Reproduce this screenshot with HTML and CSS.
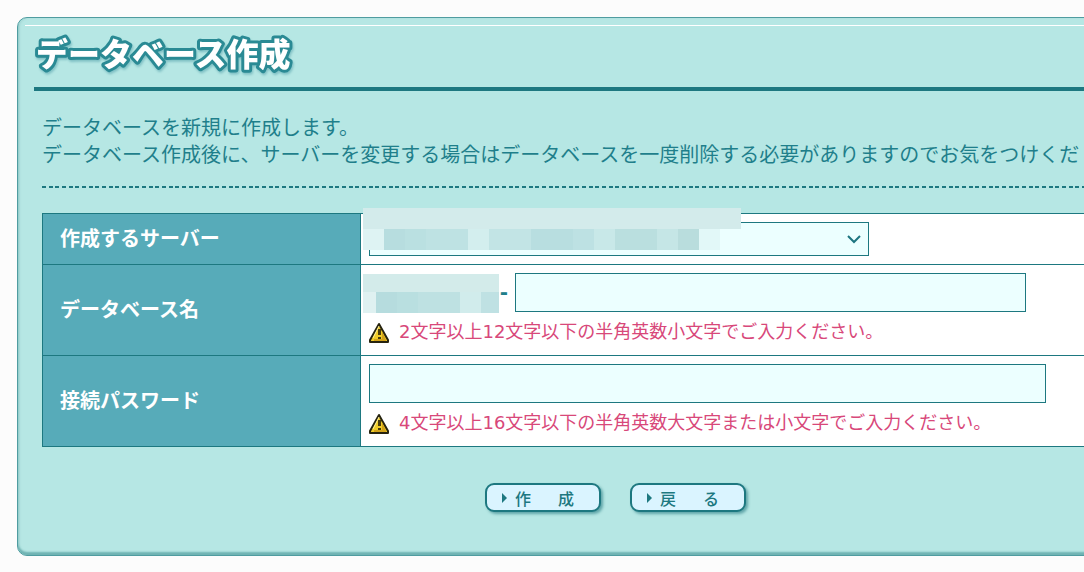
FILE: index.html
```html
<!DOCTYPE html>
<html lang="ja">
<head>
  <meta charset="UTF-8">
  <meta name="viewport" content="width=device-width, initial-scale=1.0">
  <title>データベース作成</title>
  <link rel="stylesheet" href="styles.css">
</head>
<body>
  <main class="panel">
    <h1 class="title">
      <svg width="264" height="48">
        <text x="2" y="37">データベース作成</text>
      </svg>
    </h1>

    <div class="content">
      <p class="lead">
        データベースを新規に作成します。<br>
        データベース作成後に、サーバーを変更する場合はデータベースを一度削除する必要がありますのでお気をつけくだ
      </p>

      <form action="#" method="post">
        <table class="form-table">
          <tr>
            <th scope="row"><label for="server">作成するサーバー</label></th>
            <td>
              <div class="field">
                <select id="server" name="server">
                  <option value=""></option>
                </select>
                <svg class="arrow" width="16" height="10" viewBox="0 0 16 10" aria-hidden="true">
                  <path d="M2 2l6 6 6-6" fill="none" stroke="#1d7580" stroke-width="2"/>
                </svg>
                <svg class="mask mask-server" width="378" height="42" viewBox="0 0 378 42" aria-hidden="true">
                  <path fill="#d3ebeb" d="M0 0h378v21H0z"/>
                  <path fill="#def3f3" d="M0 21h21v21H0z"/>
                  <path fill="#b7dddf" d="M21 21h21v21H21z"/>
                  <path fill="#bae0e1" d="M42 21h21v21H42z"/>
                  <path fill="#bee2e3" d="M63 21h42v21H63z"/>
                  <path fill="#d3eeee" d="M105 21h21v21h-21z"/>
                  <path fill="#c2e4e5" d="M126 21h42v21h-42z"/>
                  <path fill="#b8dee0" d="M168 21h42v21h-42z"/>
                  <path fill="#bde1e3" d="M210 21h21v21h-21z"/>
                  <path fill="#c8e8e8" d="M231 21h21v21h-21z"/>
                  <path fill="#badfdf" d="M252 21h42v21h-42z"/>
                  <path fill="#c5e6e6" d="M294 21h21v21h-21z"/>
                  <path fill="#b9dddd" d="M315 21h21v21h-21z"/>
                  <path fill="#e2f8f8" d="M336 21h21v21h-21z"/>
                </svg>
              </div>
            </td>
          </tr>
          <tr>
            <th scope="row"><label for="dbname">データベース名</label></th>
            <td>
              <div class="field">
                <span class="prefix">-</span>
                <input class="name-input" type="text" id="dbname" name="dbname">
                <svg class="mask mask-prefix" width="136" height="39" viewBox="0 0 136 39" aria-hidden="true">
                  <path fill="#d3ebea" d="M0 0h136v18H0z"/>
                  <path fill="#dff1f1" d="M0 18h13v21H0z"/>
                  <path fill="#b6dcde" d="M13 18h21v21H13z"/>
                  <path fill="#b9dfe0" d="M34 18h21v21H34z"/>
                  <path fill="#bee1e2" d="M55 18h42v21H55z"/>
                  <path fill="#d1ecec" d="M97 18h21v21H97z"/>
                  <path fill="#bfe1e3" d="M118 18h18v21h-18z"/>
                </svg>
              </div>
              <p class="hint">
                <svg width="20" height="20" viewBox="0 0 20 20" aria-hidden="true">
                  <path d="M10 1L1 17v2h18v-2z" fill="#f0cc28" stroke="#26230f" stroke-width="2" stroke-linejoin="round"/>
                  <path d="M13 8l4 9v1H5v-2h8z" fill="#d3a31a"/>
                  <path d="M10 3L4 15" stroke="#fff3a0" fill="none"/>
                  <path d="M9 6h3v6H9zM9 14h3v2H9z" fill="#4a3d0c"/>
                </svg>
                <span>2文字以上12文字以下の半角英数小文字でご入力ください。</span>
              </p>
            </td>
          </tr>
          <tr>
            <th scope="row"><label for="password">接続パスワード</label></th>
            <td>
              <div class="field">
                <input class="password-input" type="password" id="password" name="password">
              </div>
              <p class="hint">
                <svg width="20" height="20" viewBox="0 0 20 20" aria-hidden="true">
                  <path d="M10 1L1 17v2h18v-2z" fill="#f0cc28" stroke="#26230f" stroke-width="2" stroke-linejoin="round"/>
                  <path d="M13 8l4 9v1H5v-2h8z" fill="#d3a31a"/>
                  <path d="M10 3L4 15" stroke="#fff3a0" fill="none"/>
                  <path d="M9 6h3v6H9zM9 14h3v2H9z" fill="#4a3d0c"/>
                </svg>
                <span>4文字以上16文字以下の半角英数大文字または小文字でご入力ください。</span>
              </p>
            </td>
          </tr>
        </table>

        <div class="buttons">
          <button type="submit"><i class="marker"></i><span>作</span><span>成</span></button>
          <button type="button"><i class="marker"></i><span>戻</span><span>る</span></button>
        </div>
      </form>
    </div>
  </main>
</body>
</html>
```
FILE: styles.css
```css
:root {
  --teal: #1d7880;
  --text: #1f7f8b;
  --panel: #b6e7e4;
  --head: #57abb9;
  --field: #ecffff;
  --error: #d8487a;
}

* {
  box-sizing: border-box;
  margin: 0;
  padding: 0;
}

body {
  padding: 17px 0 16px 17px;
  background: #fcfcfc;
  color: var(--text);
  font-family: "DejaVu Sans", "Noto Sans CJK JP", sans-serif;
  font-size: 20px;
  line-height: 27px;
  overflow-x: hidden;
}

/* runs off the right side of the window */
.panel {
  margin-right: -10px;
  padding: 8px 0 43px 16px;
  background: linear-gradient(#fff, #fff) 7px 7px / 100% 1px no-repeat var(--panel);
  border: 1px solid #4f9ca0;
  border-radius: 10px 0 0 10px;
  box-shadow: inset 0 -3px 2px #6fb3b3, inset 2px 0 2px #a6d9d7;
}

.title {
  padding: 3px 0 10px;
  border-bottom: 4px solid var(--teal);
}

.title svg {
  display: block;
  overflow: visible;
  filter: drop-shadow(1px 2px 1px #7fc0c4);
}

.title text {
  fill: #fff;
  stroke: #2a8a94;
  stroke-width: 6px;
  stroke-linejoin: round;
  paint-order: stroke;
  font-size: 32px;
  font-weight: 900;
}

.content {
  padding: 24px 0 0 8px;
}

.lead {
  padding-bottom: 19px;
  margin-bottom: 25px;
  background: repeating-linear-gradient(90deg, var(--teal) 0 4px, transparent 4px 7px, var(--teal) 7px 11px, transparent 11px 13px, var(--teal) 13px 17px, transparent 17px 20px) left bottom / 100% 2px no-repeat;
  white-space: nowrap;
}

.form-table {
  width: 100%;
  border-collapse: collapse;
}

.form-table th,
.form-table td {
  border: 1px solid var(--teal);
  border-right: none;
}

.form-table th {
  width: 318px;
  padding: 0 17px;
  background: var(--head);
  color: #fff;
  text-align: left;
}

.form-table td {
  padding: 8px;
  background: #fff;
}

.field {
  position: relative;
  display: flex;
  align-items: center;
}

select,
input {
  appearance: none;
  height: 39px;
  padding: 0 8px;
  background: var(--field);
  border: 1px solid var(--teal);
  border-radius: 0;
  color: var(--text);
  font: inherit;
}

select {
  width: 500px;
  height: 34px;
}

.name-input {
  width: 511px;
}

.password-input {
  width: 677px;
}

.arrow {
  position: absolute;
  left: 477px;
  top: 12px;
}

.mask {
  position: absolute;
  left: -6px;
}

.mask-server {
  top: -14px;
}

.mask-prefix {
  top: 1px;
}

.prefix {
  width: 146px;
  padding-right: 7px;
  font-weight: bold;
  text-align: right;
}

.hint {
  display: flex;
  align-items: center;
  gap: 10px;
  margin-top: 6px;
  color: var(--error);
  font-size: 18px;
  white-space: nowrap;
}

.hint svg {
  flex: none;
}

.hint span {
  padding-bottom: 2px;
}

.buttons {
  display: flex;
  gap: 29px;
  padding: 36px 0 0 443px;
}

button {
  display: flex;
  align-items: center;
  width: 116px;
  height: 29px;
  padding: 0 15px;
  background: #daf4ff;
  border: 2px solid var(--teal);
  border-radius: 9px;
  box-shadow: 2px 2px 3px #5fa5a8;
  color: var(--teal);
  font: 500 16px/22px "Noto Sans CJK JP", sans-serif;
  cursor: pointer;
}

button span + span {
  margin-left: 27px;
}

.marker {
  margin-right: 8px;
  border: 5px solid transparent;
  border-left-color: var(--teal);
  border-right: none;
}
```
